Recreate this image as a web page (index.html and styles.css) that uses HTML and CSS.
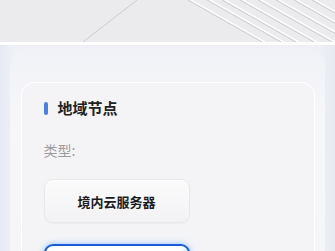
FILE: index.html
```html
<!DOCTYPE html>
<html lang="zh">
<head>
<meta charset="utf-8">
<link rel="stylesheet" href="styles.css">
</head>
<body>
<div class="banner">
  <svg class="banner-art" width="335" height="42" viewBox="0 0 335 42">
    <line x1="83" y1="42" x2="137" y2="0" stroke="#c4c4ca" stroke-width="0.8"/>
    <g stroke="#c8c8ce" stroke-width="0.9">
      <line x1="188" y1="0" x2="262" y2="42"/>
      <line x1="207" y1="0" x2="281" y2="42"/>
      <line x1="222" y1="0" x2="296" y2="42"/>
      <line x1="240" y1="0" x2="314" y2="42"/>
      <line x1="258" y1="0" x2="332" y2="42"/>
      <line x1="276" y1="0" x2="350" y2="42"/>
      <line x1="294" y1="0" x2="368" y2="42"/>
      <line x1="312" y1="0" x2="386" y2="42"/>
    </g>
    <g stroke="#ffffff" stroke-width="1.2">
      <line x1="191" y1="0" x2="265" y2="42"/>
      <line x1="210" y1="0" x2="284" y2="42"/>
      <line x1="225" y1="0" x2="299" y2="42"/>
      <line x1="243" y1="0" x2="317" y2="42"/>
      <line x1="261" y1="0" x2="335" y2="42"/>
      <line x1="279" y1="0" x2="353" y2="42"/>
      <line x1="297" y1="0" x2="371" y2="42"/>
      <line x1="315" y1="0" x2="389" y2="42"/>
    </g>
  </svg>
</div>
<div class="main">
  <div class="outer">
    <div class="card">
      <div class="title-row">
        <span class="pill"></span>
        <span class="title">地域节点</span>
      </div>
      <div class="label">类型:</div>
      <div class="options">
        <div class="opt">境内云服务器</div>
        <div class="opt opt-active"></div>
      </div>
    </div>
  </div>
</div>
</body>
</html>
```
FILE: styles.css
```css
html, body {
  margin: 0;
  padding: 0;
}
body {
  width: 335px;
  height: 251px;
  overflow: hidden;
  background: #eceef4;
  font-family: "Noto Sans CJK SC", "Noto Sans", sans-serif;
}
.banner {
  height: 42px;
  background: #ebebee;
  border-bottom: 3px solid #ffffff;
}
.banner-art {
  display: block;
}
.main {
  background: linear-gradient(90deg, #e6e9f3 0px, #eef0f6 12px, #eef0f6 320px, #e7e9f0 335px);
  padding: 2px 10px 0 10px;
}
.outer {
  background: linear-gradient(180deg, #f0f1f6 0%, #f7f7fa 30%, #f5f5f8 100%);
  border-radius: 18px 18px 0 0;
  padding: 35px 10px 0 11px;
}
.card {
  background: #f4f4f7;
  border: 1.5px solid #ffffff;
  border-bottom: none;
  border-radius: 14px 14px 0 0;
  padding: 13px 22px 0 21.5px;
}
.title-row {
  display: flex;
  align-items: center;
  gap: 10px;
  height: 24px;
}
.pill {
  width: 4px;
  height: 13px;
  border-radius: 2px;
  background: #4d7fe0;
}
.title {
  font-size: 15px;
  font-weight: 700;
  color: #222;
  line-height: 24px;
}
.label {
  margin-top: 19px;
  font-size: 14px;
  color: #9c9c9f;
  line-height: 22px;
}
.options {
  margin-top: 18px;
  display: flex;
  flex-direction: column;
  gap: 21px;
}
.opt {
  width: 144px;
  height: 42px;
  border: 1px solid #e8e8eb;
  border-radius: 9px;
  background: linear-gradient(180deg, #fbfbfc 0%, #f2f2f4 100%);
  box-shadow: 0 1px 2px rgba(0,0,0,0.04), inset 0 1px 0 #ffffff;
  display: flex;
  align-items: center;
  justify-content: center;
  font-size: 13px;
  font-weight: 700;
  color: #1c1c1e;
}
.opt-active {
  border: 2px solid #1a5bd8;
  width: 142px;
  background: linear-gradient(135deg, #ffffff 0%, #ffffff 75%, #27c3f5 92%, #1a7fe8 100%);
  box-shadow: 0 0 6px rgba(60,150,255,0.55);
}
```
